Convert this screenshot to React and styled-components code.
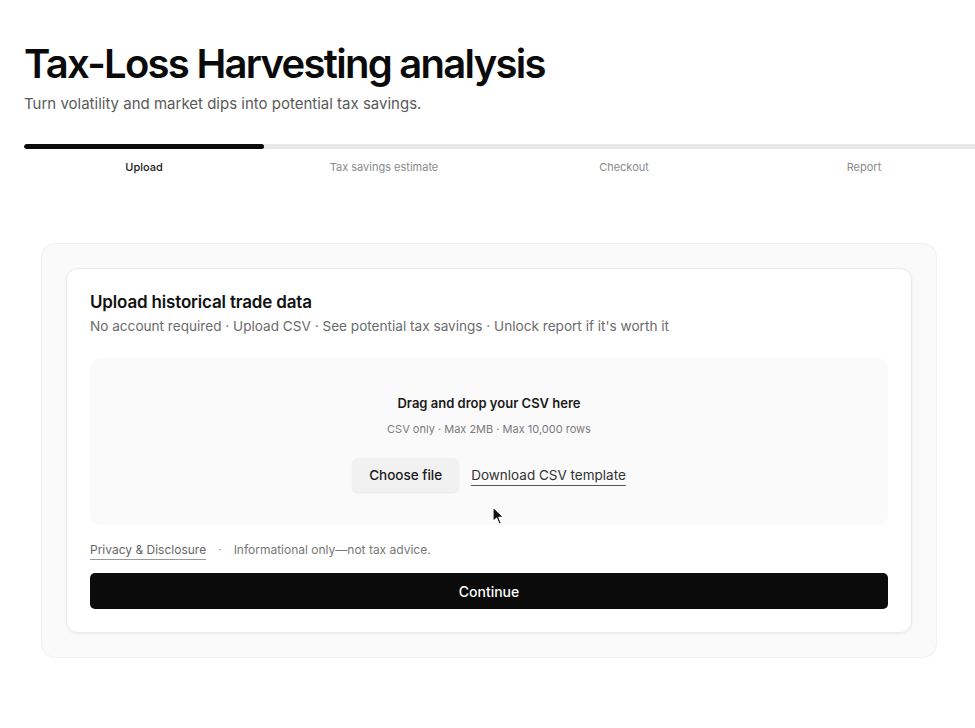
import React from 'react';
import styled, { createGlobalStyle } from 'styled-components';

const GlobalStyle = createGlobalStyle`
  body {
    margin: 0;
    background: #ffffff;
    font-family: Inter, "Noto Sans", "Liberation Sans", sans-serif;
    color: #0b0b0c;
    overflow-x: hidden;
  }
`;

const steps = ['Upload', 'Tax savings estimate', 'Checkout', 'Report'];

const App = () => {
  return (
    <Page>
      <GlobalStyle />
      <Header>
        <Title>Tax-Loss Harvesting analysis</Title>
        <Lead>Turn volatility and market dips into potential tax savings.</Lead>
      </Header>
      <Stepper>
        <Track>
          <Fill style={{ width: `${100 / steps.length}%` }} />
        </Track>
        <StepRow>
          {steps.map((s, i) => (
            <StepLabel key={s} $active={i === 0}>{s}</StepLabel>
          ))}
        </StepRow>
      </Stepper>
      <Panel>
        <Card>
          <CardTitle>Upload historical trade data</CardTitle>
          <CardSub>
            No account required · Upload CSV · See potential tax savings · Unlock report if it's worth it
          </CardSub>
          <DropZone>
            <DropTitle>Drag and drop your CSV here</DropTitle>
            <DropHint>CSV only · Max 2MB · Max 10,000 rows</DropHint>
            <Actions>
              <FileButton>Choose file</FileButton>
              <TextLink>Download CSV template</TextLink>
            </Actions>
            <Cursor width="14" height="20" viewBox="0 0 14 20">
              <path d="M1 1 L1 15.5 L4.6 12.2 L7.2 18.2 L9.4 17.2 L6.9 11.4 L11.8 11.4 Z" fill="#111" stroke="#fff" strokeWidth="1.2" strokeLinejoin="round" />
            </Cursor>
          </DropZone>
          <FootNote>
            <SmallLink>Privacy &amp; Disclosure</SmallLink>
            <Dot>·</Dot>
            <span>Informational only—not tax advice.</span>
          </FootNote>
          <PrimaryButton>Continue</PrimaryButton>
        </Card>
      </Panel>
    </Page>
  );
};

export default App;

const Page = styled.div`
  padding: 40px 0 70px 24px;
  min-height: 728px;
  box-sizing: border-box;
`;

const Header = styled.header`
  display: flex;
  flex-direction: column;
  gap: 6px;
`;

const Title = styled.h1`
  margin: 0;
  font-size: 40px;
  line-height: 48px;
  font-weight: 600;
  letter-spacing: -0.043em;
  color: #0a0a0a;
`;

const Lead = styled.p`
  margin: 0;
  font-size: 15px;
  line-height: 20px;
  color: #5a5a5a;
`;

const Stepper = styled.div`
  width: 960px;
  margin-top: 30px;
`;

const Track = styled.div`
  height: 5px;
  background: #e9e9ea;
  border-radius: 3px;
  overflow: hidden;
`;

const Fill = styled.div`
  height: 100%;
  background: #0b0b0c;
  border-radius: 3px;
`;

const StepRow = styled.div`
  display: grid;
  grid-template-columns: repeat(4, 1fr);
  margin-top: 11px;
`;

const StepLabel = styled.div`
  text-align: center;
  font-size: 11px;
  line-height: 14px;
  font-weight: ${(p) => (p.$active ? 500 : 400)};
  color: ${(p) => (p.$active ? '#1a1a1a' : '#8a8a8a')};
`;

const Panel = styled.section`
  width: 896px;
  box-sizing: border-box;
  margin: 69px 0 0 17px;
  padding: 24px;
  background: #fafafa;
  border: 1px solid #f1f1f1;
  border-radius: 14px;
`;

const Card = styled.div`
  position: relative;
  background: #ffffff;
  border: 1px solid #ebebeb;
  border-radius: 12px;
  box-shadow: 0 1px 3px rgba(0, 0, 0, 0.06);
  padding: 22px 23px 23px;
  display: flex;
  flex-direction: column;
`;

const CardTitle = styled.h2`
  margin: 0;
  font-size: 17px;
  line-height: 22px;
  font-weight: 600;
  letter-spacing: -0.01em;
  color: #111;
`;

const CardSub = styled.p`
  margin: 4px 0 0;
  font-size: 13.6px;
  line-height: 18px;
  color: #6b6b6b;
`;

const DropZone = styled.div`
  position: relative;
  margin-top: 23px;
  height: 167px;
  box-sizing: border-box;
  padding-top: 36px;
  background: #fafafa;
  border-radius: 10px;
  display: flex;
  flex-direction: column;
  align-items: center;
`;

const DropTitle = styled.div`
  font-size: 13px;
  line-height: 18px;
  font-weight: 600;
  color: #1a1a1a;
`;

const DropHint = styled.div`
  margin-top: 9px;
  font-size: 11px;
  line-height: 16px;
  color: #7b7b7b;
`;

const Actions = styled.div`
  display: flex;
  align-items: center;
  gap: 12px;
  margin-top: 21px;
`;

const FileButton = styled.button`
  font-family: inherit;
  font-size: 13.5px;
  font-weight: 500;
  color: #1a1a1a;
  height: 34px;
  padding: 0 17px;
  border: none;
  border-radius: 6px;
  background: #f1f1f1;
  box-shadow: 0 1px 2px rgba(0, 0, 0, 0.08);
  cursor: pointer;
`;

const TextLink = styled.a`
  font-size: 13.5px;
  color: #333;
  text-decoration: underline;
  text-underline-offset: 5px;
  text-decoration-color: #555;
  cursor: pointer;
`;

const Cursor = styled.svg`
  position: absolute;
  left: 402px;
  top: 148px;
`;

const FootNote = styled.div`
  display: flex;
  align-items: center;
  gap: 12px;
  margin-top: 17px;
  font-size: 12px;
  line-height: 16px;
  color: #777;
`;

const SmallLink = styled.a`
  color: #666;
  text-decoration: underline;
  text-underline-offset: 5px;
  text-decoration-color: #999;
`;

const Dot = styled.span`
  color: #999;
`;

const PrimaryButton = styled.button`
  margin-top: 15px;
  height: 36px;
  width: 100%;
  border: none;
  border-radius: 5px;
  background: #0b0b0c;
  color: #fff;
  font-family: inherit;
  font-size: 14px;
  font-weight: 500;
  cursor: pointer;
`;
